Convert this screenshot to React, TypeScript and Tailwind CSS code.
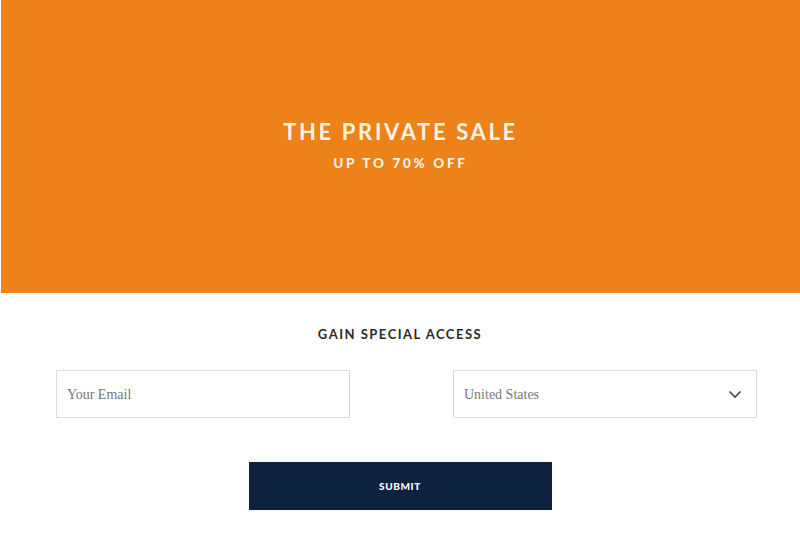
import React from "react";

export default function App() {
  return (
    <div className="w-[800px] h-[545px] bg-white overflow-hidden" style={{ fontFamily: "Lato, 'Liberation Sans', sans-serif" }}>
      <div className="h-[293px] ml-px bg-[#ec8219] flex flex-col items-center justify-center pb-[4px]">
        <h1 className="text-[22px] leading-[26px] font-bold tracking-[0.12em] text-[#fdf3e6]">THE PRIVATE SALE</h1>
        <p className="mt-[10px] text-[13.5px] leading-[16px] font-black tracking-[0.2em] text-[#fdf3e6]">UP TO 70% OFF</p>
      </div>
      <div className="flex flex-col items-center">
        <h2 className="mt-[33px] text-[13px] leading-[16px] font-bold tracking-[0.115em] text-[#2a2a2a]">GAIN SPECIAL ACCESS</h2>
        <div className="mt-[28px] w-full flex justify-between pl-[56px] pr-[43px]">
          <div className="w-[294px] h-[48px] border border-[#dcdcdc] flex items-center px-[10px]">
            <span className="text-[14px] text-[#777]" style={{ fontFamily: "'Liberation Serif', serif" }}>Your Email</span>
          </div>
          <div className="w-[304px] h-[48px] border border-[#dcdcdc] flex items-center justify-between pl-[10px] pr-[14px]">
            <span className="text-[14px] text-[#777]" style={{ fontFamily: "'Liberation Serif', serif" }}>United States</span>
            <svg width="14" height="9" viewBox="0 0 14 9" fill="none">
              <path d="M1.5 1.5 L7 7 L12.5 1.5" stroke="#444" strokeWidth="1.6" />
            </svg>
          </div>
        </div>
        <button className="mt-[44px] w-[303px] h-[48px] bg-[#0d223f] text-white text-[10px] font-black tracking-[0.06em] flex items-center justify-center">
          SUBMIT
        </button>
      </div>
    </div>
  );
}
